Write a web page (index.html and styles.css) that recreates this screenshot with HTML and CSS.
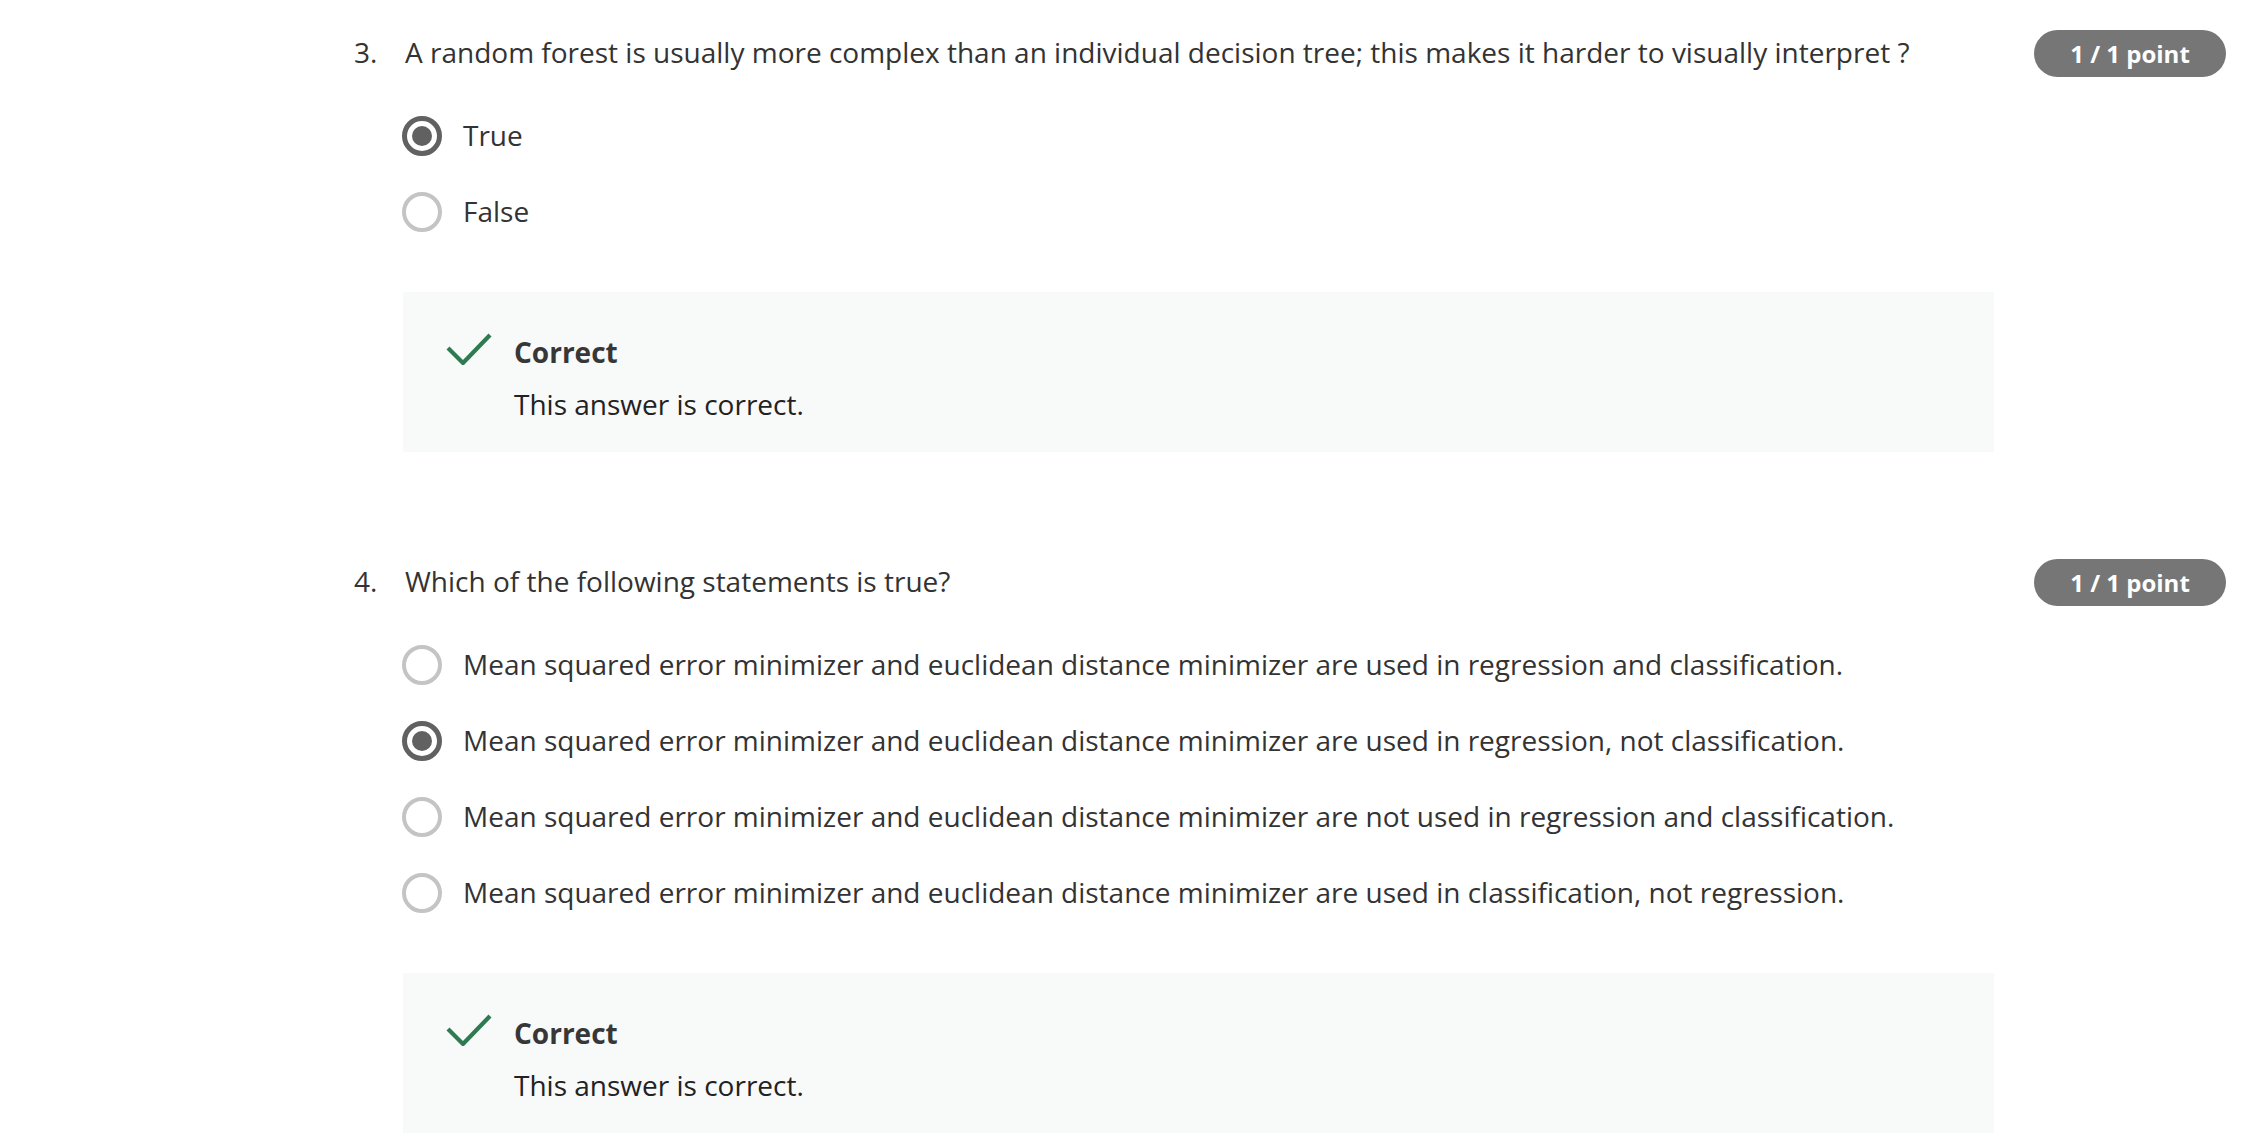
FILE: index.html
```html
<!DOCTYPE html>
<html lang="en">
<head>
<meta charset="utf-8">
<title>Quiz</title>
<link rel="stylesheet" href="styles.css">
</head>
<body>
<main class="quiz">
  <section class="question">
    <div class="q-header">
      <span class="q-num">3.</span>
      <p class="q-text">A random forest is usually more complex than an individual decision tree; this makes it harder to visually interpret ?</p>
      <span class="badge">1 / 1 point</span>
    </div>
    <ul class="options">
      <li class="option"><span class="radio checked"></span><span class="opt-label">True</span></li>
      <li class="option"><span class="radio"></span><span class="opt-label">False</span></li>
    </ul>
    <div class="feedback">
      <svg class="check" viewBox="0 0 46 32" width="46" height="32"><path d="M2 15 L17 30 L44 2" fill="none" stroke="#2e7b51" stroke-width="4.2"/></svg>
      <div class="fb-text">
        <div class="fb-title">Correct</div>
        <div class="fb-body">This answer is correct.</div>
      </div>
    </div>
  </section>

  <section class="question">
    <div class="q-header">
      <span class="q-num">4.</span>
      <p class="q-text">Which of the following statements is true?</p>
      <span class="badge">1 / 1 point</span>
    </div>
    <ul class="options">
      <li class="option"><span class="radio"></span><span class="opt-label">Mean squared error minimizer and euclidean distance minimizer are used in regression and classification.</span></li>
      <li class="option"><span class="radio checked"></span><span class="opt-label">Mean squared error minimizer and euclidean distance minimizer are used in regression, not classification.</span></li>
      <li class="option"><span class="radio"></span><span class="opt-label">Mean squared error minimizer and euclidean distance minimizer are not used in regression and classification.</span></li>
      <li class="option"><span class="radio"></span><span class="opt-label">Mean squared error minimizer and euclidean distance minimizer are used in classification, not regression.</span></li>
    </ul>
    <div class="feedback">
      <svg class="check" viewBox="0 0 46 32" width="46" height="32"><path d="M2 15 L17 30 L44 2" fill="none" stroke="#2e7b51" stroke-width="4.2"/></svg>
      <div class="fb-text">
        <div class="fb-title">Correct</div>
        <div class="fb-body">This answer is correct.</div>
      </div>
    </div>
  </section>
</main>
</body>
</html>
```

FILE: styles.css
```css
html, body {
  margin: 0;
  padding: 0;
  background: #ffffff;
}

body {
  font-family: "Open Sans", "Noto Sans", sans-serif;
  color: #333333;
}

.quiz {
  padding: 30px 38px 0 354px;
}

.question + .question {
  margin-top: 107px;
}

.q-header {
  display: flex;
  align-items: center;
  height: 47px;
}

.q-num {
  width: 51px;
  flex: none;
  font-size: 28px;
  line-height: 40px;
  margin-top: -3px;
  color: #333333;
}

.q-text {
  flex: 1;
  margin: -3px 0 0 0;
  font-size: 28px;
  line-height: 40px;
  color: #333333;
}

.badge {
  flex: none;
  width: 192px;
  height: 47px;
  border-radius: 24px;
  background: #767676;
  color: #ffffff;
  font-weight: 700;
  font-size: 24px;
  display: flex;
  align-items: center;
  justify-content: center;
}

.options {
  list-style: none;
  margin: 21px 0 0 48px;
  padding: 0;
}

.option {
  display: flex;
  align-items: center;
  height: 76px;
}

.radio {
  flex: none;
  box-sizing: border-box;
  width: 40px;
  height: 40px;
  border-radius: 50%;
  border: 4px solid #c4c4c4;
  display: flex;
  align-items: center;
  justify-content: center;
}

.radio.checked {
  border: 5px solid #616161;
}

.radio.checked::after {
  content: "";
  width: 20px;
  height: 20px;
  border-radius: 50%;
  background: #616161;
}

.opt-label {
  margin-left: 21px;
  padding-bottom: 3px;
  font-size: 28px;
  line-height: 40px;
  color: #333333;
}

.feedback {
  margin: 42px 0 0 49px;
  width: 1591px;
  height: 160px;
  box-sizing: border-box;
  background: #f8f9f9;
  padding: 38px 0 0 43px;
  display: flex;
  align-items: flex-start;
}

.check {
  flex: none;
  margin-top: 3px;
}

.fb-text {
  margin-left: 22px;
}

.fb-title {
  font-weight: 700;
  font-size: 28px;
  line-height: 44px;
  color: #373737;
}

.fb-body {
  font-size: 28px;
  line-height: 60px;
  color: #222222;
}
```
